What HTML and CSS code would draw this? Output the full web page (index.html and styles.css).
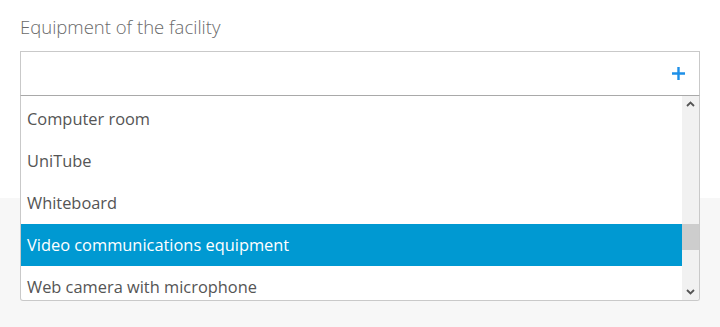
FILE: index.html
```html
<!DOCTYPE html>
<html>
<head>
<meta charset="utf-8">
<link rel="stylesheet" href="styles.css">
</head>
<body>
<div class="panel">
  <div class="field">
    <div class="label">Equipment of the facility</div>
    <div class="control">
      <div class="input">
        <svg class="plus" width="15" height="15" viewBox="0 0 15 15"><path d="M7.5 1v13M1 7.5h13" stroke="#1e90e8" stroke-width="2.4" fill="none"/></svg>
      </div>
      <div class="dropdown">
        <div class="items">
          <div class="item">Computer room</div>
          <div class="item">UniTube</div>
          <div class="item">Whiteboard</div>
          <div class="item active">Video communications equipment</div>
          <div class="item">Web camera with microphone</div>
        </div>
        <div class="scrollbar">
          <svg class="arrow up" width="9" height="6" viewBox="0 0 9 6"><path d="M1 5l3.5-3.5L8 5" stroke="#555" stroke-width="1.8" fill="none"/></svg>
          <div class="track"><div class="thumb"></div></div>
          <svg class="arrow down" width="9" height="6" viewBox="0 0 9 6"><path d="M1 1l3.5 3.5L8 1" stroke="#555" stroke-width="1.8" fill="none"/></svg>
        </div>
      </div>
    </div>
  </div>
</div>
<div class="rest"></div>
</body>
</html>
```
FILE: styles.css
```css
html, body {
  margin: 0;
  padding: 0;
  width: 720px;
  height: 327px;
  overflow: hidden;
  font-family: "Open Sans", "Noto Sans", sans-serif;
  background: #f7f7f7;
}
.panel {
  background: #fff;
  height: 198px;
}
.field {
  padding: 14px 20px 0 20px;
}
.label {
  font-size: 18.5px;
  font-weight: 300;
  color: #6a6a6a;
  line-height: 26px;
  height: 37px;
}
.control {
  position: relative;
}
.input {
  height: 43px;
  border: 1px solid #c9c9c9;
  border-bottom-color: #a9a9a9;
  background: #fff;
  display: flex;
  align-items: center;
  justify-content: flex-end;
  padding-right: 13px;
}
.plus {
  display: block;
}
.dropdown {
  position: absolute;
  left: 0;
  right: 0;
  top: 45px;
  height: 204px;
  background: #fff;
  border: 1px solid #c9c9c9;
  border-top: none;
  border-radius: 0 0 3px 3px;
  display: flex;
  overflow: hidden;
}
.items {
  flex: 1;
  padding-top: 2px;
  overflow: hidden;
}
.item {
  height: 42px;
  line-height: 42px;
  padding-left: 6px;
  font-size: 16.4px;
  color: #555;
  white-space: nowrap;
}
.item.active {
  background: #0099d2;
  color: #fff;
}
.scrollbar {
  width: 17px;
  background: #f1f1f1;
  display: flex;
  flex-direction: column;
  align-items: center;
}
.arrow {
  display: block;
  flex: none;
}
.arrow.up {
  margin-top: 5px;
}
.arrow.down {
  margin-bottom: 5px;
}
.track {
  flex: 1;
  width: 100%;
  position: relative;
}
.thumb {
  position: absolute;
  left: 0;
  right: 0;
  top: 117px;
  height: 26px;
  background: #cdcdcd;
}
.rest {
  height: 129px;
}
```
